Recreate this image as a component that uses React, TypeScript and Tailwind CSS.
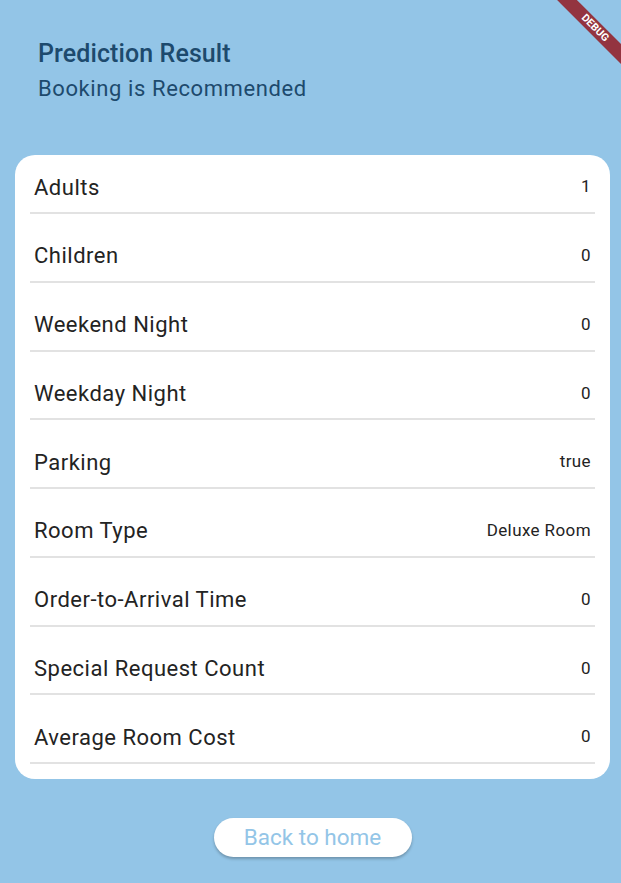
import React from 'react';

const rows: { label: string; value: string }[] = [
  { label: 'Adults', value: '1' },
  { label: 'Children', value: '0' },
  { label: 'Weekend Night', value: '0' },
  { label: 'Weekday Night', value: '0' },
  { label: 'Parking', value: 'true' },
  { label: 'Room Type', value: 'Deluxe Room' },
  { label: 'Order-to-Arrival Time', value: '0' },
  { label: 'Special Request Count', value: '0' },
  { label: 'Average Room Cost', value: '0' },
];

export default function App() {
  return (
    <div
      className="relative min-h-[883px] w-full overflow-hidden bg-[#93c5e7]"
      style={{ fontFamily: 'Roboto, "Liberation Sans", sans-serif' }}
    >
      {/* debug ribbon */}
      <div className="absolute top-0 right-0 h-[100px] w-[100px] overflow-hidden">
        <div className="absolute top-[21px] left-[14px] h-[14px] w-[120px] rotate-45 bg-[#933440] text-center text-[10.5px] font-bold leading-[14px] text-white">
          DEBUG
        </div>
      </div>

      {/* header */}
      <div className="px-[38px] pt-[38px]">
        <h1 className="text-[25px] font-medium leading-[32px] tracking-[0.1px] text-[#1d4a6d]">Prediction Result</h1>
        <p className="mt-[4px] text-[22px] leading-[30px] tracking-[0.6px] text-[#1d4a6d]">Booking is Recommended</p>
      </div>

      {/* details card */}
      <div className="mt-[51px] mr-[11px] ml-[15px] rounded-[20px] bg-white p-[15px]">
        <div className="flex flex-col gap-[24.75px]">
          {rows.map((r) => (
            <div key={r.label}>
              <div className="flex h-[34px] items-center justify-between px-[4px] text-[#232323]">
                <span className="text-[22px] tracking-[0.5px]">{r.label}</span>
                <span className="text-[17px] tracking-[0.4px]">{r.value}</span>
              </div>
              <div className="mt-[8px] h-[2px] bg-[#e2e2e2]" />
            </div>
          ))}
        </div>
      </div>

      {/* back button */}
      <div className="mt-[39px] flex justify-center">
        <button className="ml-[4px] h-[39px] w-[198px] rounded-full bg-white text-[22.5px] text-[#93c5e7] shadow-[0_2px_3px_rgba(0,0,0,0.25)]">
          Back to home
        </button>
      </div>
    </div>
  );
}
